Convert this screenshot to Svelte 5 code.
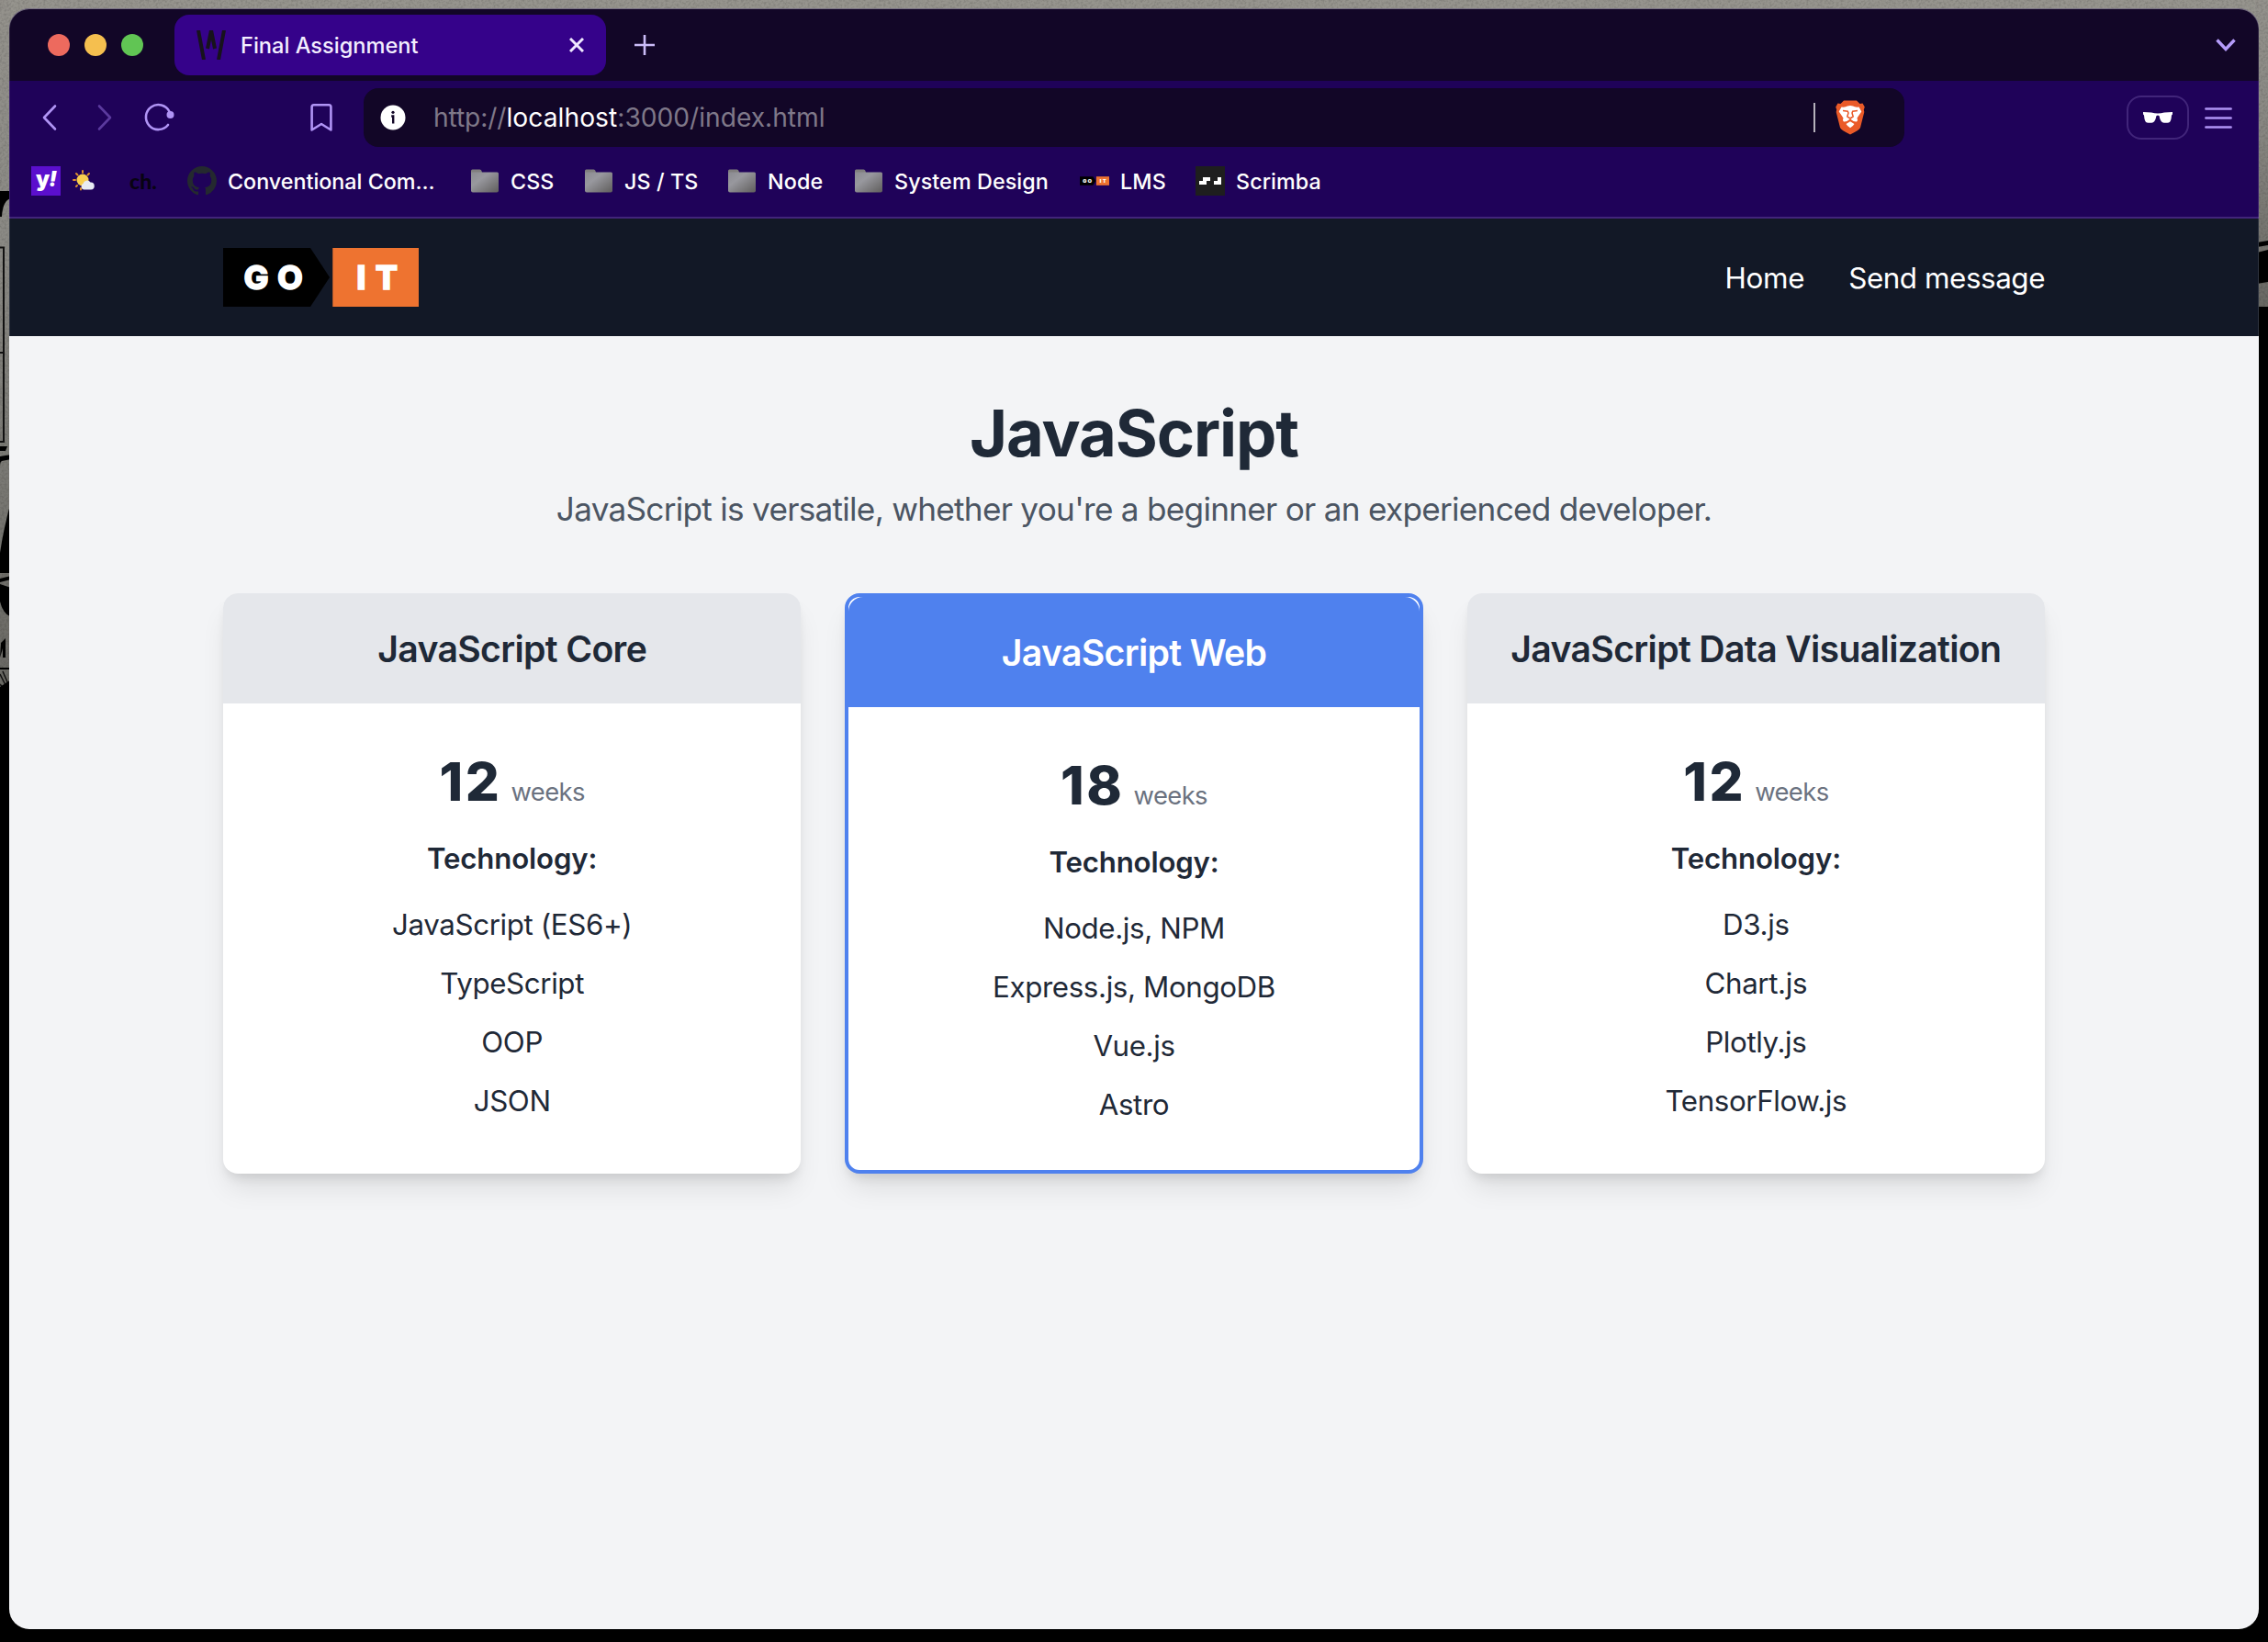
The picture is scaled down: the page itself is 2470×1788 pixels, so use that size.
<script>
  const courses = [
    { title: 'JavaScript Core', weeks: 12, tech: ['JavaScript (ES6+)', 'TypeScript', 'OOP', 'JSON'], featured: false },
    { title: 'JavaScript Web', weeks: 18, tech: ['Node.js, NPM', 'Express.js, MongoDB', 'Vue.js', 'Astro'], featured: true },
    { title: 'JavaScript Data Visualization', weeks: 12, tech: ['D3.js', 'Chart.js', 'Plotly.js', 'TensorFlow.js'], featured: false }
  ];

  const folders = ['CSS', 'JS / TS', 'Node', 'System Design'];
</script>

{#snippet goit(cls)}
  <svg class={cls} viewBox="0 0 213 64" role="img" aria-label="GO IT">
    <path d="M0 0H95L116 32L95 64H0Z" fill="#000" />
    <rect x="119.3" y="0" width="93.7" height="64" fill="#ee7330" />
    <g class="lockup">
      <text x="36" y="45.2">G</text>
      <text x="73" y="45.2">O</text>
      <text x="150.5" y="45.2">I</text>
      <text x="178" y="45.2">T</text>
    </g>
  </svg>
{/snippet}

<div class="desktop">
  <svg class="wallpaper" viewBox="0 0 2470 1788" aria-hidden="true">
    <defs>
      <linearGradient id="stone" x1="0" y1="0" x2="0" y2="1">
        <stop offset="0" stop-color="#94928c" />
        <stop offset="0.35" stop-color="#8b8a85" />
        <stop offset="1" stop-color="#6a6964" />
      </linearGradient>
      <filter id="grain" x="0" y="0" width="100%" height="100%">
        <feTurbulence type="fractalNoise" baseFrequency="0.4" numOctaves="2" result="n" />
        <feColorMatrix in="n" type="matrix" values="0 0 0 0 0  0 0 0 0 0  0 0 0 0 0  0.6 0 0 0 -0.24" result="d" />
        <feComposite in="d" in2="SourceGraphic" operator="in" result="g" />
        <feMerge>
          <feMergeNode in="SourceGraphic" />
          <feMergeNode in="g" />
        </feMerge>
      </filter>
    </defs>
    <rect width="2470" height="1788" fill="#000" />
    <g filter="url(#grain)">
      <rect width="2470" height="40" fill="#96948e" />
      <rect width="12" height="750" fill="url(#stone)" />
      <rect x="2456" width="14" height="334" fill="url(#stone)" />
    </g>
    <path d="M0 208H12V216Q3 218 2 236H0Z" />
    <path d="M0 269.500H4V481H0M0 384H4" fill="none" stroke="#111" stroke-width="2" />
    <path d="M0 486H8L6 491H0ZM0 497L12 495V500L2 502Q0 503 0 507Z" />
    <path d="M12 546Q4 575 0 602V624H12ZM0 630L12 627V631L0 634ZM0 636L12 640V672Q3 668 0 655Z" />
    <path d="M1 700L6 695V716H3V706L0 716ZM0 727H12V729H0Z" />
    <path d="M0 734L6 746M3 731L9 745M0 745L6 752" stroke="#111" stroke-width="1.500" />
    <path d="M0 748L12 740V756H0Z" />
    <path d="M2458 264L2470 262V267L2458 269ZM2458 275L2470 272V307L2458 309Z" />
  </svg>

  <div class="window">
    <header class="tabs">
      <div class="lights"><i class="red"></i><i class="amber"></i><i class="green"></i></div>
      <div class="tab">
        <svg class="i32" viewBox="0 0 32 32" fill="none" stroke="#17131c" stroke-width="4">
          <path d="M2 0L8 32M30 0L24 32M16 0L12 20M16 0L20 20" />
        </svg>
        <span class="tab-title">Final Assignment</span>
        <svg class="close" viewBox="0 0 16 16" stroke="#efe9ff" stroke-width="3"><path d="M1 1L15 15M15 1L1 15" /></svg>
      </div>
      <svg class="plus" viewBox="0 0 22 22" stroke="#cbbcf8" stroke-width="2.600"><path d="M11 0.500V21.500M0.500 11H21.500" stroke-linecap="round" /></svg>
      <svg class="chev" viewBox="0 0 22 16" fill="none" stroke="#b59cfa" stroke-width="3.400"><path d="M1.500 2.500L11 12.500L20.500 2.500" /></svg>
    </header>

    <div class="toolbar">
      <svg class="nav-icons" viewBox="0 0 152 40" fill="none" stroke="#b094f5" stroke-width="2.600" stroke-linecap="round" stroke-linejoin="round">
        <path d="M18 7.500L6 20L18 32.500" />
        <path d="M66 7.500L78 20L66 32.500" stroke="#5b3a9e" />
        <path d="M141 28A13.500 13.500 0 1 1 142.500 13.500" />
        <circle cx="143.500" cy="17" r="4" fill="#b094f5" stroke="none" />
      </svg>
      <svg class="bookmark" viewBox="0 0 24 32" fill="none" stroke="#b094f5" stroke-width="2.600" stroke-linejoin="round">
        <path d="M1.600 29.500V4.500Q1.600 2.300 3.800 2.300H20.200Q22.400 2.300 22.400 4.500V29.500L12 23Z" />
      </svg>
      <div class="address">
        <svg class="info" viewBox="0 0 28 28"><circle cx="14" cy="14" r="13.500" fill="#fff" /><circle cx="14" cy="8.300" r="1.600" fill="#120627" /><path d="M12.200 12.500H14.200V20.500" fill="none" stroke="#120627" stroke-width="2.400" /></svg>
        <span class="url"><span class="scheme">http://</span><b>localhost</b><span class="rest">:3000/index.html</span></span>
        <span class="sep"></span>
        <svg class="brave" viewBox="0 0 32 38">
          <path d="M9 0.500H23L26.500 4L29.500 3.500L31.800 7.500L30.800 10.500L31.300 13L27 30Q26 32.500 16 37.500Q6 32.500 5 30L0.700 13L1.200 10.500L0.200 7.500L2.500 3.500L5.500 4Z" fill="#ea5a28" />
          <path d="M6.500 7.500Q11 8 13 6.500Q16 5.500 19 6.500Q21 8 25.500 7.500L28.300 12.500L23.500 19.500Q24.800 22 23 23.500Q20 24 16 20.500Q12 24 9 23.500Q7.200 22 8.500 19.500L3.700 12.500ZM16 23.200L20.500 26Q19.500 28 16 30.200Q12.500 28 11.500 26Z" fill="#fff" />
          <path d="M8 11.500L13.300 12.300L14 14L12.800 18L16 20L19.200 18L18 14L18.700 12.300L24 11.500" fill="none" stroke="#ea5a28" stroke-width="1.500" />
        </svg>
      </div>
      <div class="private">
        <svg viewBox="0 0 32 12" fill="#fff"><path d="M0 0L9 0.500Q16 2.600 23 0.500L32 0V2.500L31 3.500Q30.500 11 28 11.500Q24 12.300 21 11.300Q18.500 9.500 17.600 4.200L16 3.600L14.400 4.200Q13.500 9.500 11 11.300Q8 12.300 4 11.500Q1.500 11 1 3.500L0 2.500Z" /></svg>
      </div>
      <svg class="menu" viewBox="0 0 30 26" stroke="#b094f5" stroke-width="2.600" stroke-linecap="round"><path d="M1.400 3.500H28.600M1.400 13.500H28.600M1.400 23.500H28.600" /></svg>
    </div>

    <nav class="bookmarks">
      <div class="yahoo">y<i>!</i></div>
      <svg class="sun" viewBox="0 0 24 24">
        <g stroke="#e0902c" stroke-width="2" stroke-linecap="round"><path d="M11 1V3M4 4L5.500 5.500M18 4L16.500 5.500M1 11H3M4 18L5 17M9 20V21.500" /></g>
        <circle cx="11" cy="11" r="6.500" fill="#f9cf4f" />
        <path d="M12 21.500A3.500 3.500 0 0 1 11.500 15A4.500 4.500 0 0 1 19.500 13.500A4 4 0 0 1 20 21.500Z" fill="#e9ecf3" />
      </svg>
      <div class="ch">ch.</div>
      <div class="mark">
        <svg class="i32" viewBox="0 0 16 16" fill="#24292f"><path d="M8 0C3.580 0 0 3.580 0 8c0 3.540 2.290 6.530 5.470 7.590.4.070.55-.17.55-.38 0-.19-.01-.82-.01-1.490-2.010.37-2.530-.49-2.690-.94-.09-.23-.48-.94-.82-1.130-.28-.15-.68-.52-.01-.53.63-.01 1.080.58 1.230.82.72 1.210 1.870.87 2.330.66.07-.52.28-.87.51-1.070-1.780-.2-3.640-.89-3.640-3.950 0-.87.31-1.590.82-2.150-.08-.2-.36-1.020.08-2.120 0 0 .67-.21 2.200.82.64-.18 1.320-.27 2-.27s1.360.09 2 .27c1.530-1.040 2.200-.82 2.200-.82.44 1.100.16 1.920.08 2.120.51.56.82 1.270.82 2.150 0 3.070-1.870 3.750-3.650 3.950.29.25.54.73.54 1.480 0 1.070-.01 1.930-.01 2.200 0 .21.15.46.55.38A8.010 8.010 0 0 0 16 8c0-4.420-3.580-8-8-8z" /></svg>
        <span class="cc">Conventional Com...</span>
      </div>
      {#each folders as name}
        <div class="mark folder">
          <svg viewBox="0 0 30 26">
            <defs><linearGradient id="fold" x1="0" y1="0" x2="1" y2="1"><stop offset="0" stop-color="#8b8b91" /><stop offset="0.35" stop-color="#98989e" /><stop offset="1" stop-color="#5f5d5c" /></linearGradient></defs>
            <path d="M0 4V2Q0 0.500 1.500 0.500H9.500Q11 0.500 11.500 2L12 4Z" fill="#807e7e" />
            <path d="M0 3.500H28.500Q30 3.500 30 5V23.500Q30 25.500 28 25.500H2Q0 25.500 0 23.500Z" fill="url(#fold)" />
          </svg>
          {name}
        </div>
      {/each}
      <div class="mark">{@render goit('tiny')}LMS</div>
      <div class="mark">
        <svg class="i32" viewBox="0 0 32 32"><rect width="32" height="32" fill="#1e1e1e" /><path d="M8 12H16V16H12V20H4V16H8ZM24 12H28V20H20V16H24Z" fill="#fff" /></svg>
        Scrimba
      </div>
    </nav>

    <div class="site-header">
      {@render goit('logo')}
      <div class="links"><span class="home">Home</span><span class="send">Send message</span></div>
    </div>

    <main>
      <h1>JavaScript</h1>
      <p class="lead">JavaScript is versatile, whether you're a beginner or an experienced developer.</p>
      <section class="cards">
        {#each courses as c}
          <article class="card" class:featured={c.featured}>
            <h2>{c.title}</h2>
            <div class="body">
              <p class="duration"><strong>{c.weeks}</strong><span>weeks</span></p>
              <h3>Technology:</h3>
              <ul>
                {#each c.tech as t}<li>{t}</li>{/each}
              </ul>
            </div>
          </article>
        {/each}
      </section>
    </main>
  </div>
</div>

<style>
  :global(body) { margin: 0; background: #000; }
  * { box-sizing: border-box; }
  svg { display: block; flex: none; }
  h1, h2, h3, p, ul { margin: 0; padding: 0; }

  .desktop {
    position: relative;
    width: 2470px;
    height: 1788px;
    padding: 9px 10px 14px;
    overflow: hidden;
    font-family: Inter, 'Liberation Sans', sans-serif;
    color: #1f2937;
  }
  .wallpaper { position: absolute; inset: 0; width: 100%; height: 100%; }

  .window {
    position: relative;
    display: flex;
    flex-direction: column;
    height: 1765px;
    border-radius: 22px;
    overflow: hidden;
    background: #f3f4f6;
  }
  .window::after {
    content: '';
    position: absolute;
    inset: 0;
    border-radius: 22px;
    box-shadow: inset 0 1px 0 rgba(255, 255, 255, 0.35), inset 0 0 0 1px rgba(255, 255, 255, 0.12);
  }

  .tabs { display: flex; align-items: center; height: 79px; padding: 0 25px 0 42px; background: #120627; }
  .lights { display: flex; gap: 16px; width: 138px; }
  .lights i { width: 24px; height: 24px; border-radius: 50%; }
  .red { background: #ed6a5e; }
  .amber { background: #f5bf4f; }
  .green { background: #61c554; }
  .tab {
    display: flex;
    align-items: center;
    width: 470px;
    height: 66px;
    padding: 0 24px;
    border-radius: 16px;
    background: #35028a;
    color: #f3eeff;
    font-size: 23.6px;
    font-weight: 500;
  }
  .i32 { width: 32px; height: 32px; }
  .tab-title { flex: 1; margin-left: 16px; padding-top: 1px; }
  .close { width: 16px; height: 16px; }
  .plus { width: 22px; height: 22px; margin-left: 31px; }
  .chev { width: 22px; height: 16px; margin-left: auto; }

  .toolbar { display: flex; align-items: center; height: 80px; padding: 0 29px 0 32px; background: #1f0259; }
  .nav-icons { width: 152px; height: 40px; }
  .bookmark { width: 24px; height: 32px; margin-left: 144px; }
  .address {
    display: flex;
    align-items: center;
    width: 1678px;
    height: 64px;
    margin-left: 34px;
    padding: 0 44px 0 18px;
    border-radius: 16px;
    background: #120627;
  }
  .info { width: 28px; height: 28px; }
  .url { flex: 1; margin-left: 30px; font-size: 28.2px; color: #7f7889; white-space: nowrap; }
  .url b { font-weight: 400; color: #fff; letter-spacing: 0.05px; }
  .scheme { letter-spacing: -0.1px; }
  .rest { letter-spacing: -0.02px; }
  .sep { width: 2px; height: 32px; background: #b5b1bb; }
  .brave { width: 32px; height: 38px; margin-left: 22px; margin-right: -1px; }
  .private {
    display: grid;
    place-items: center;
    width: 68px;
    height: 48px;
    margin-left: 242px;
    border: 2px solid #41257a;
    border-radius: 16px;
  }
  .private svg { width: 32px; height: 12px; }
  .menu { width: 30px; height: 26px; margin-left: auto; }

  .bookmarks {
    display: grid;
    grid-template-columns: 45px 62px 63px 309px 124px 156px 138px 245px 126px 150px;
    align-items: center;
    height: 70px;
    padding: 0 0 10px 24px;
    border-bottom: 2px solid #41257a;
    background: #1f0259;
    color: #fff;
    font-size: 23.3px;
    font-weight: 500;
    letter-spacing: 0.1px;
    white-space: nowrap;
  }
  .mark { display: flex; align-items: center; gap: 12px; }
  .cc { letter-spacing: 0; }
  .folder svg { width: 30px; height: 26px; }
  .folder { gap: 13px; }
  .yahoo {
    display: flex;
    align-items: center;
    justify-content: center;
    width: 32px;
    height: 32px;
    padding-bottom: 4px;
    background: #5b0fcd;
    font: 900 24px/28px Inter, sans-serif;
    letter-spacing: -1px;
  }
  .yahoo i { font-size: 23px; }
  .sun { width: 24px; height: 24px; }
  .ch { color: #080312; font: 900 23px/32px Lato, sans-serif; }
  .tiny { width: 32px; height: 10px; }

  .lockup { fill: #fff; stroke: #fff; stroke-width: 1.4px; font: 800 36px Inter, sans-serif; text-anchor: middle; }
  .site-header {
    display: flex;
    align-items: center;
    justify-content: space-between;
    height: 128px;
    padding: 0 233px;
    background: #121826;
    color: #fff;
  }
  .logo { width: 213px; height: 64px; }
  .links { display: flex; gap: 48px; padding-top: 1px; font-size: 31.4px; line-height: 48px; }
  .home { letter-spacing: -0.3px; }
  .send { letter-spacing: -0.45px; }

  main { padding: 65px 233px 0; text-align: center; }
  h1 { padding-top: 1px; font-size: 70.4px; line-height: 80px; font-weight: 700; letter-spacing: -1.1px; }
  .lead { margin-top: 14px; font-size: 35.2px; line-height: 56px; letter-spacing: -0.74px; color: #4b5563; }
  .cards { display: grid; grid-template-columns: repeat(3, 1fr); gap: 48px; margin-top: 64px; }
  .card {
    border-radius: 16px;
    background: #fff;
    box-shadow: 0 20px 30px -6px rgba(0, 0, 0, 0.1), 0 8px 12px -4px rgba(0, 0, 0, 0.1);
  }
  .card h2 {
    padding: 33px 0 31px;
    border-radius: 16px 16px 0 0;
    background: #e5e7eb;
    font-size: 39.2px;
    line-height: 56px;
    font-weight: 600;
    letter-spacing: -0.67px;
    white-space: nowrap;
  }
  .featured { border: 4px solid #4f81ee; }
  .featured h2 { background: #4f81ee; color: #fff; }
  .body { padding: 49px 48px 47px; }
  .duration { line-height: 72px; height: 72px; }
  .duration strong { font-size: 58.2px; letter-spacing: 2.6px; font-weight: 800; }
  .duration span { margin-left: 10px; font-size: 27.4px; letter-spacing: -0.6px; color: #6b7280; }
  h3 { margin-top: 24px; font-size: 31.2px; line-height: 48px; font-weight: 600; letter-spacing: -0.15px; }
  ul { display: grid; gap: 16px; margin-top: 24px; list-style: none; }
  li { font-size: 31.3px; line-height: 48px; letter-spacing: -0.38px; }
</style>
